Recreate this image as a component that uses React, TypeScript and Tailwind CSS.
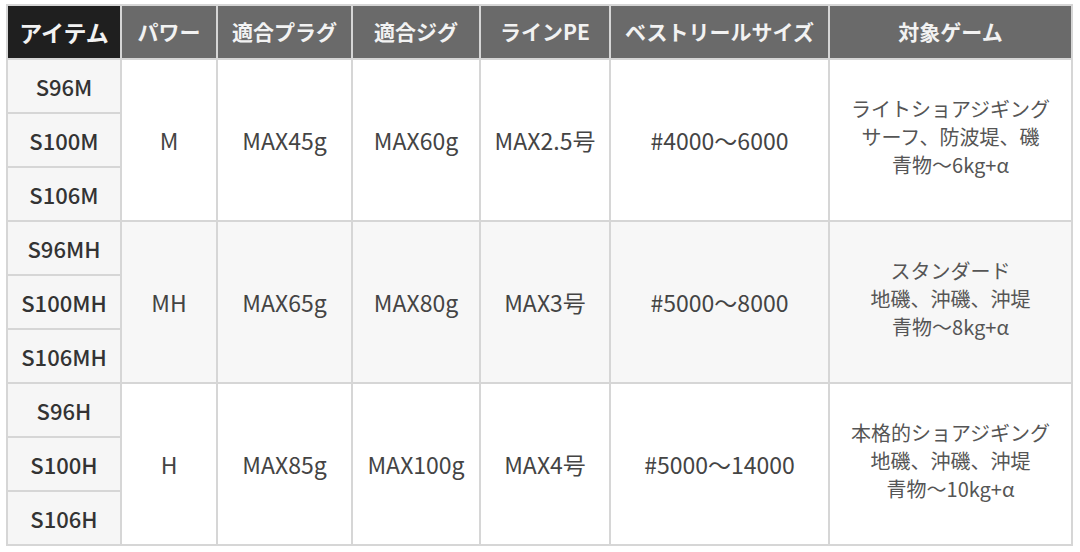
import React from 'react';

type Group = {
  items: string[];
  power: string;
  plug: string;
  jig: string;
  line: string;
  reel: string;
  game: string[];
  shaded: boolean;
};

const groups: Group[] = [
  {
    items: ['S96M', 'S100M', 'S106M'],
    power: 'M',
    plug: 'MAX45g',
    jig: 'MAX60g',
    line: 'MAX2.5号',
    reel: '#4000～6000',
    game: ['ライトショアジギング', 'サーフ、防波堤、磯', '青物～6kg+α'],
    shaded: false,
  },
  {
    items: ['S96MH', 'S100MH', 'S106MH'],
    power: 'MH',
    plug: 'MAX65g',
    jig: 'MAX80g',
    line: 'MAX3号',
    reel: '#5000～8000',
    game: ['スタンダード', '地磯、沖磯、沖堤', '青物～8kg+α'],
    shaded: true,
  },
  {
    items: ['S96H', 'S100H', 'S106H'],
    power: 'H',
    plug: 'MAX85g',
    jig: 'MAX100g',
    line: 'MAX4号',
    reel: '#5000～14000',
    game: ['本格的ショアジギング', '地磯、沖磯、沖堤', '青物～10kg+α'],
    shaded: false,
  },
];

const headers = ['パワー', '適合プラグ', '適合ジグ', 'ラインPE', 'ベストリールサイズ', '対象ゲーム'];

export default function App() {
  return (
    <div
      className="w-[1080px] h-[552px] bg-white pl-[6px] pt-[4px]"
      style={{ fontFamily: '"Noto Sans CJK JP", "Noto Sans", sans-serif' }}
    >
      <table className="table-fixed border-collapse w-[1065px] text-center">
        <colgroup>
          <col className="w-[114px]" />
          <col className="w-[96px]" />
          <col className="w-[135px]" />
          <col className="w-[128px]" />
          <col className="w-[130px]" />
          <col className="w-[219px]" />
          <col className="w-[243px]" />
        </colgroup>
        <thead>
          <tr className="h-[54px]">
            <th className="bg-[#1f1f1f] text-[#f2f2f2] text-[23px] font-semibold border-2 border-[#d6d6d6]">
              アイテム
            </th>
            {headers.map((h) => (
              <th
                key={h}
                className="bg-[#6a6a6a] text-[#f2f2f2] text-[21px] font-semibold border-2 border-[#d6d6d6] whitespace-nowrap"
              >
                {h}
              </th>
            ))}
          </tr>
        </thead>
        <tbody>
          {groups.map((g) =>
            g.items.map((item, i) => {
              const bg = g.shaded ? 'bg-[#f7f7f7]' : 'bg-white';
              const cell = `${bg} border-2 border-[#d6d6d6] text-[23px] text-[#444] whitespace-nowrap`;
              return (
                <tr key={item} className="h-[54px]">
                  <td className="bg-[#f6f6f6] border-2 border-[#d6d6d6] text-[22px] font-medium text-[#333]">
                    {item}
                  </td>
                  {i === 0 && (
                    <>
                      <td rowSpan={3} className={cell}>
                        {g.power}
                      </td>
                      <td rowSpan={3} className={cell}>
                        {g.plug}
                      </td>
                      <td rowSpan={3} className={cell}>
                        {g.jig}
                      </td>
                      <td rowSpan={3} className={cell}>
                        {g.line}
                      </td>
                      <td rowSpan={3} className={cell}>
                        {g.reel}
                      </td>
                      <td
                        rowSpan={3}
                        className={`${bg} border-2 border-[#d6d6d6] text-[20px] leading-[28px] text-[#555] pb-[6px]`}
                      >
                        {g.game.map((l) => (
                          <div key={l}>{l}</div>
                        ))}
                      </td>
                    </>
                  )}
                </tr>
              );
            })
          )}
        </tbody>
      </table>
    </div>
  );
}
